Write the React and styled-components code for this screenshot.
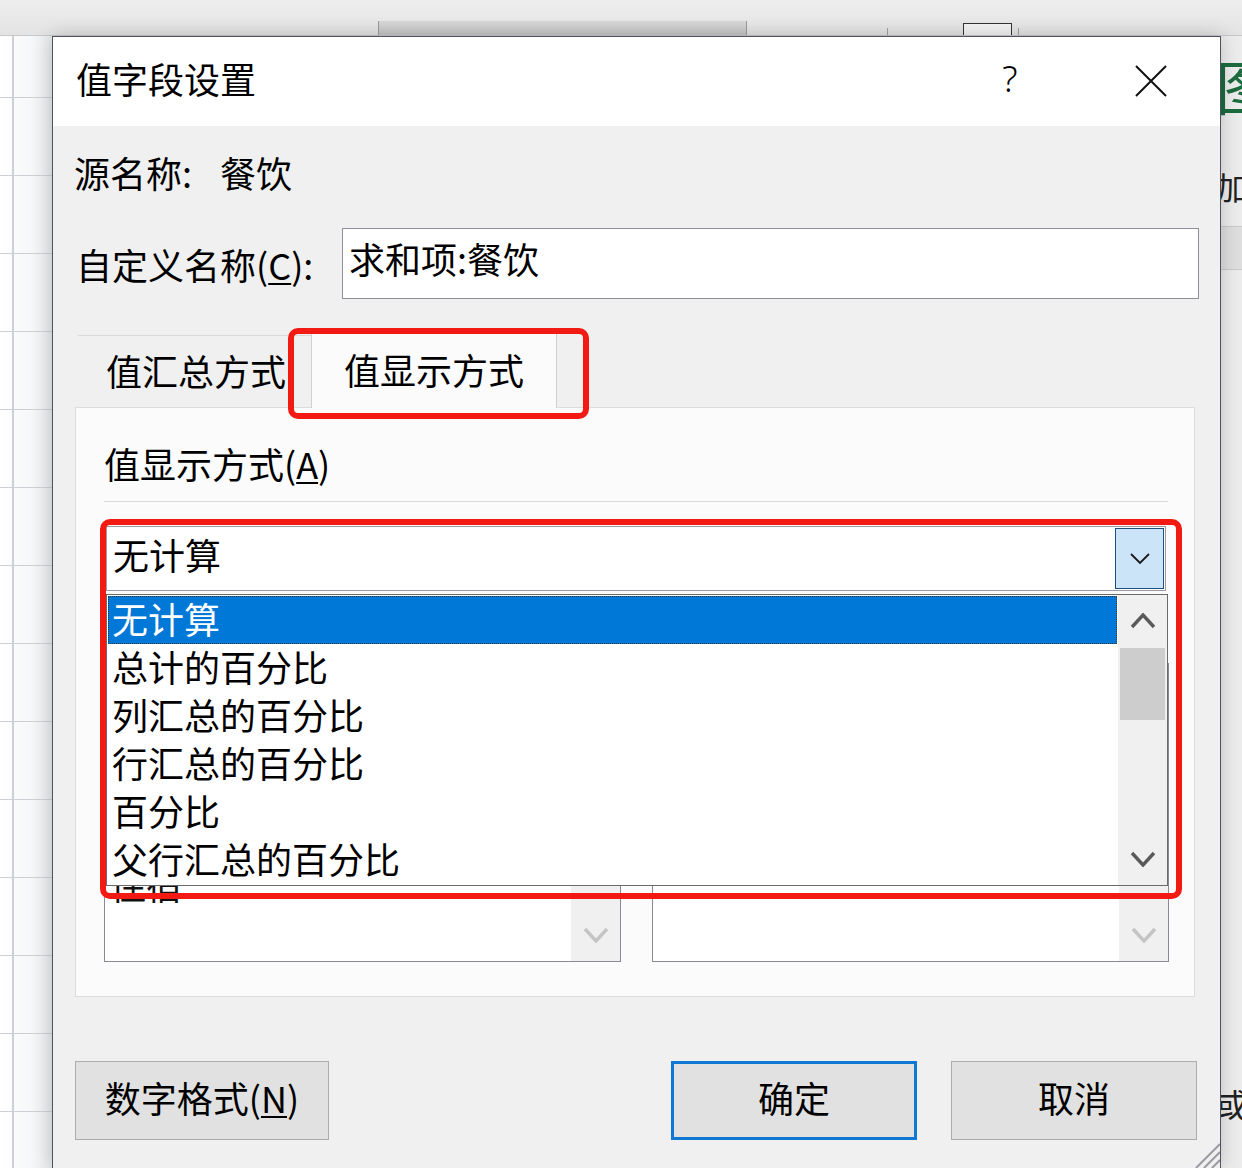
import React from 'react'
import styled, { createGlobalStyle } from 'styled-components'

const GlobalStyle = createGlobalStyle`
  html, body { margin: 0; padding: 0; }
  body {
    font-family: "Noto Sans CJK SC", "Noto Sans", sans-serif;
    color: #000;
  }
`;

const Screen = styled.div`
  position: relative;
  width: 1242px;
  height: 1168px;
  overflow: hidden;
  display: grid;
  grid-template-rows: 36px 1fr;
  background: #ececec;
`;

/* ---------- excel backdrop ---------- */

const Ribbon = styled.div`
  display: flex;
  align-items: flex-end;
  padding-left: 378px;
  background: linear-gradient(#eeeeee, #e3e3e3);
  border-bottom: 1px solid #c8c8c8;
  box-sizing: border-box;
`;

const RibbonBar = styled.div`
  width: 367px;
  height: 14px;
  background: linear-gradient(#d8d8d8, #c4c4c4);
  border-left: 1px solid #9a9a9a;
  border-right: 1px solid #9a9a9a;
`;

const RibbonTick = styled.div`
  width: 1px;
  height: 7px;
  margin-left: ${({ $gap }) => $gap}px;
  background: #a0a0a0;
`;

const RibbonBox = styled.div`
  width: 47px;
  height: 11px;
  margin-left: ${({ $gap }) => $gap}px;
  border: 1px solid #333;
  border-bottom: none;
  background: #f2f2f2;
`;

const Sheet = styled.div`
  display: grid;
  grid-template-columns: 52px 1fr 52px;
`;

const LeftCells = styled.div`
  background-image:
    linear-gradient(to right, transparent 12px, #cfd0d6 12px, #cfd0d6 14px, transparent 14px),
    repeating-linear-gradient(to bottom, transparent 0, transparent 61px, #cfd0d6 61px, #cfd0d6 62px, transparent 62px, transparent 78px),
    linear-gradient(to right, #ffffff 0, #f6f7f8 60%, #e9eaed 100%);
`;

const RightCells = styled.div`
  display: flex;
  flex-direction: column;
  padding-left: 26px;
  background: #ececec;
`;

const GreenMark = styled.span`
  margin-top: 18px;
  font-size: 58px;
  line-height: 62px;
  color: #1d6b3f;
`;

const SideGlyph = styled.span`
  margin-top: ${({ $top }) => $top}px;
  font-size: 32px;
  line-height: 36px;
  color: #222;
`;

const SideBand = styled.div`
  margin-top: 22px;
  margin-left: -26px;
  height: 42px;
  background: #dedede;
  border-top: 1px solid #c8c8c8;
  border-bottom: 1px solid #c8c8c8;
`;

const SideDot = styled.span`
  margin-top: 460px;
  width: 3px;
  height: 3px;
  background: #111;
`;

/* ---------- dialog window ---------- */

const Dialog = styled.section`
  position: absolute;
  left: 52px;
  top: 36px;
  width: 1169px;
  height: 1132px;
  box-sizing: border-box;
  border: 1px solid #4f5060;
  border-bottom: none;
  background: #f0f0f0;
  box-shadow: 0 0 18px rgba(0, 0, 0, 0.2);
  display: flex;
  flex-direction: column;
`;

const TitleBar = styled.header`
  height: 89px;
  flex: none;
  display: flex;
  align-items: center;
  padding-left: 23px;
  background: #fff;
`;

const Title = styled.h1`
  flex: 1;
  margin: -7px 0 0;
  font-size: 36px;
  font-weight: 400;
  line-height: 50px;
`;

const HelpButton = styled.span`
  width: 60px;
  margin: -6px 81px 0 0;
  text-align: center;
  font-family: "Noto Sans", "DejaVu Sans", sans-serif;
  font-weight: 300;
  font-size: 36px;
  line-height: 40px;
`;

const CloseButton = styled.span`
  width: 60px;
  margin: -2px 39px 0 0;
  display: flex;
  justify-content: center;
`;

const Body = styled.div`
  flex: 1;
  display: flex;
  flex-direction: column;
  padding: 0 21px;
`;

const TextLine = styled.div`
  display: flex;
  align-items: center;
  gap: ${({ $gap }) => $gap || 0}px;
  margin-top: ${({ $top }) => $top || 0}px;
  height: 50px;
  font-size: 36px;
  line-height: 50px;
  white-space: nowrap;
`;

const NameRow = styled.div`
  display: flex;
  align-items: center;
  margin-top: 31px;
  height: 71px;
`;

const NameLabel = styled.label`
  width: 266px;
  flex: none;
  padding-left: 2px;
  font-size: 36px;
  line-height: 50px;
  white-space: nowrap;
`;

const NameInput = styled.div`
  flex: 1;
  height: 71px;
  box-sizing: border-box;
  border: 1px solid #8f8f98;
  background: #fff;
  padding: 0 6px;
  font-size: 36px;
  line-height: 58px;
`;

const Key = styled.u`
  text-decoration-thickness: 2px;
  text-underline-offset: 3px;
`;

const TabStrip = styled.div`
  display: flex;
  align-items: flex-end;
  margin-top: 34px;
  padding-left: 4px;
  height: 74px;
  position: relative;
  z-index: 1;
`;

const Tab = styled.div`
  box-sizing: border-box;
  display: flex;
  align-items: center;
  font-size: 36px;
  line-height: 50px;
  white-space: nowrap;
  padding-bottom: 4px;
  width: ${({ $active }) => ($active ? 246 : 233)}px;
  height: ${({ $active }) => ($active ? 75 : 72)}px;
  margin-bottom: ${({ $active }) => ($active ? -1 : 0)}px;
  justify-content: ${({ $active }) => ($active ? 'center' : 'flex-start')};
  padding-left: ${({ $active }) => ($active ? 0 : 28)}px;
  background: ${({ $active }) => ($active ? '#fbfbfc' : 'transparent')};
  border-top: 1px solid #d9d9d9;
  border-left: ${({ $active }) => ($active ? '1px solid #d0d0d0' : 'none')};
  border-right: ${({ $active }) => ($active ? '1px solid #d0d0d0' : 'none')};
`;

const Panel = styled.div`
  margin-left: 1px;
  width: 1120px;
  height: 590px;
  box-sizing: border-box;
  border: 1px solid #dcdcdc;
  background: #fbfbfc;
  padding: 0 26px 0 28px;
  display: flex;
  flex-direction: column;
`;

const Separator = styled.div`
  margin-top: 13px;
  height: 1px;
  background: #dadada;
`;

const Combo = styled.div`
  margin: 24px 2px 0;
  height: 65px;
  box-sizing: border-box;
  border: 1px solid #9a9aa2;
  background: #fff;
  display: flex;
  align-items: stretch;
`;

const ComboText = styled.span`
  flex: 1;
  padding-left: 6px;
  font-size: 36px;
  line-height: 54px;
`;

const ComboButton = styled.span`
  width: 49px;
  margin: 1px;
  box-sizing: border-box;
  border: 1px solid #1d4f80;
  background: #cce4f7;
  display: flex;
  align-items: center;
  justify-content: center;
`;

const FieldGrid = styled.div`
  margin-top: 72px;
  display: grid;
  grid-template-columns: 517px 517px;
  column-gap: 31px;
`;

const FieldBox = styled.div`
  height: 299px;
  box-sizing: border-box;
  border: 1px solid #8a8a96;
  background: #fff;
  display: flex;
`;

const FieldItems = styled.div`
  flex: 1;
  padding: 196px 0 0 5px;
  font-size: 36px;
  line-height: 48px;
  color: #111;
`;

const FieldScroll = styled.div`
  width: 49px;
  display: flex;
  align-items: flex-end;
  justify-content: center;
  padding-bottom: 18px;
  background: #f0f0f0;
`;

const ButtonRow = styled.div`
  margin-top: 64px;
  display: flex;
  justify-content: space-between;
  padding: 0 2px 0 1px;
`;

const ButtonGroup = styled.div`
  display: flex;
  gap: 34px;
`;

const DialogButton = styled.button`
  width: ${({ $w }) => $w}px;
  height: 79px;
  box-sizing: border-box;
  border: ${({ $primary }) => ($primary ? '3px solid #0f78d4' : '1px solid #acacac')};
  background: #e1e1e1;
  font-family: inherit;
  font-size: 36px;
  color: #000;
  padding: 0 0 7px;
`;

const DropList = styled.div`
  position: absolute;
  left: 53px;
  top: 557px;
  width: 1062px;
  height: 292px;
  box-sizing: border-box;
  border: 1px solid #6a6a6a;
  background: #fff;
  display: flex;
  z-index: 2;
`;

const Options = styled.ul`
  flex: 1;
  margin: 0;
  padding: 1px;
  list-style: none;
`;

const Option = styled.li`
  height: 48px;
  box-sizing: border-box;
  padding-left: 4px;
  font-size: 36px;
  line-height: 44px;
  color: ${({ $selected }) => ($selected ? '#fff' : '#000')};
  background: ${({ $selected }) => ($selected ? '#0078d7' : 'transparent')};
  outline: ${({ $selected }) => ($selected ? '1px dotted #3a3a3a' : 'none')};
  outline-offset: -1px;
  white-space: nowrap;
`;

const Scrollbar = styled.div`
  width: 49px;
  background: #f0f0f0;
  display: flex;
  flex-direction: column;
`;

const ScrollArrow = styled.div`
  height: 52px;
  display: flex;
  align-items: center;
  justify-content: center;
`;

const ScrollThumb = styled.div`
  height: 72px;
  margin: 1px 2px 0;
  background: #cdcdcd;
`;

const ScrollTrack = styled.div`
  flex: 1;
`;

const ResizeGrip = styled.svg`
  position: absolute;
  right: 0;
  bottom: 0;
`;

const Highlight = styled.div`
  position: absolute;
  left: ${({ $x }) => $x}px;
  top: ${({ $y }) => $y}px;
  width: ${({ $w }) => $w}px;
  height: ${({ $h }) => $h}px;
  box-sizing: border-box;
  border: 6px solid #f41a14;
  border-radius: 10px;
  z-index: 5;
  pointer-events: none;
`;

const Chevron = ({ up, color = '#5a5a5a', w = 22, h = 12, sw = 3.4 }) => (
  <svg width={w + 4} height={h + 4} viewBox={`0 0 ${w + 4} ${h + 4}`}>
    <polyline
      points={up ? `2,${h + 2} ${w / 2 + 2},2 ${w + 2},${h + 2}` : `2,2 ${w / 2 + 2},${h + 2} ${w + 2},2`}
      fill="none"
      stroke={color}
      strokeWidth={sw}
    />
  </svg>
);

const options = ['无计算', '总计的百分比', '列汇总的百分比', '行汇总的百分比', '百分比', '父行汇总的百分比'];

export default function App() {
  return (
    <>
      <GlobalStyle />
      <Screen>
        <Ribbon>
          <RibbonBar />
          <RibbonTick $gap={140} />
          <RibbonBox $gap={75} />
          <RibbonTick $gap={6} />
        </Ribbon>
        <Sheet>
          <LeftCells />
          <div />
          <RightCells>
            <GreenMark>图</GreenMark>
            <SideGlyph $top={52}>加</SideGlyph>
            <SideBand />
            <SideDot />
            <SideGlyph $top={352}>或</SideGlyph>
          </RightCells>
        </Sheet>

        <Dialog>
          <TitleBar>
            <Title>值字段设置</Title>
            <HelpButton>?</HelpButton>
            <CloseButton>
              <svg width="32" height="32" viewBox="0 0 32 32">
                <path d="M1 1 L31 31 M31 1 L1 31" stroke="#111" strokeWidth="2" fill="none" />
              </svg>
            </CloseButton>
          </TitleBar>

          <Body>
            <TextLine $top={21} $gap={28}>
              <span>源名称:</span>
              <span>餐饮</span>
            </TextLine>

            <NameRow>
              <NameLabel>自定义名称(<Key>C</Key>):</NameLabel>
              <NameInput>求和项:餐饮</NameInput>
            </NameRow>

            <TabStrip>
              <Tab>值汇总方式</Tab>
              <Tab $active>值显示方式</Tab>
            </TabStrip>

            <Panel>
              <TextLine $top={30}>值显示方式(<Key>A</Key>)</TextLine>
              <Separator />
              <Combo>
                <ComboText>无计算</ComboText>
                <ComboButton>
                  <svg width="20" height="12" viewBox="0 0 20 12">
                    <polyline points="1,1 10,10 19,1" fill="none" stroke="#1a1a1a" strokeWidth="1.8" />
                  </svg>
                </ComboButton>
              </Combo>
              <FieldGrid>
                <FieldBox>
                  <FieldItems>住宿</FieldItems>
                  <FieldScroll>
                    <Chevron color="#c4c4c4" />
                  </FieldScroll>
                </FieldBox>
                <FieldBox>
                  <FieldItems />
                  <FieldScroll>
                    <Chevron color="#c4c4c4" />
                  </FieldScroll>
                </FieldBox>
              </FieldGrid>
            </Panel>

            <ButtonRow>
              <DialogButton $w={254}>数字格式(<Key>N</Key>)</DialogButton>
              <ButtonGroup>
                <DialogButton $w={246} $primary>确定</DialogButton>
                <DialogButton $w={246}>取消</DialogButton>
              </ButtonGroup>
            </ButtonRow>
          </Body>

          <DropList>
            <Options>
              {options.map((o, i) => (
                <Option key={o} $selected={i === 0}>{o}</Option>
              ))}
            </Options>
            <Scrollbar>
              <ScrollArrow>
                <Chevron up />
              </ScrollArrow>
              <ScrollThumb />
              <ScrollTrack />
              <ScrollArrow>
                <Chevron />
              </ScrollArrow>
            </Scrollbar>
          </DropList>

          <ResizeGrip width="28" height="28" viewBox="0 0 28 28">
            <path d="M28 4 L4 28 M28 12 L12 28 M28 20 L20 28" stroke="#9a9aa2" strokeWidth="2" />
          </ResizeGrip>
        </Dialog>

        <Highlight $x={288} $y={328} $w={301} $h={91} />
        <Highlight $x={100} $y={519} $w={1082} $h={380} />
      </Screen>
    </>
  );
}
